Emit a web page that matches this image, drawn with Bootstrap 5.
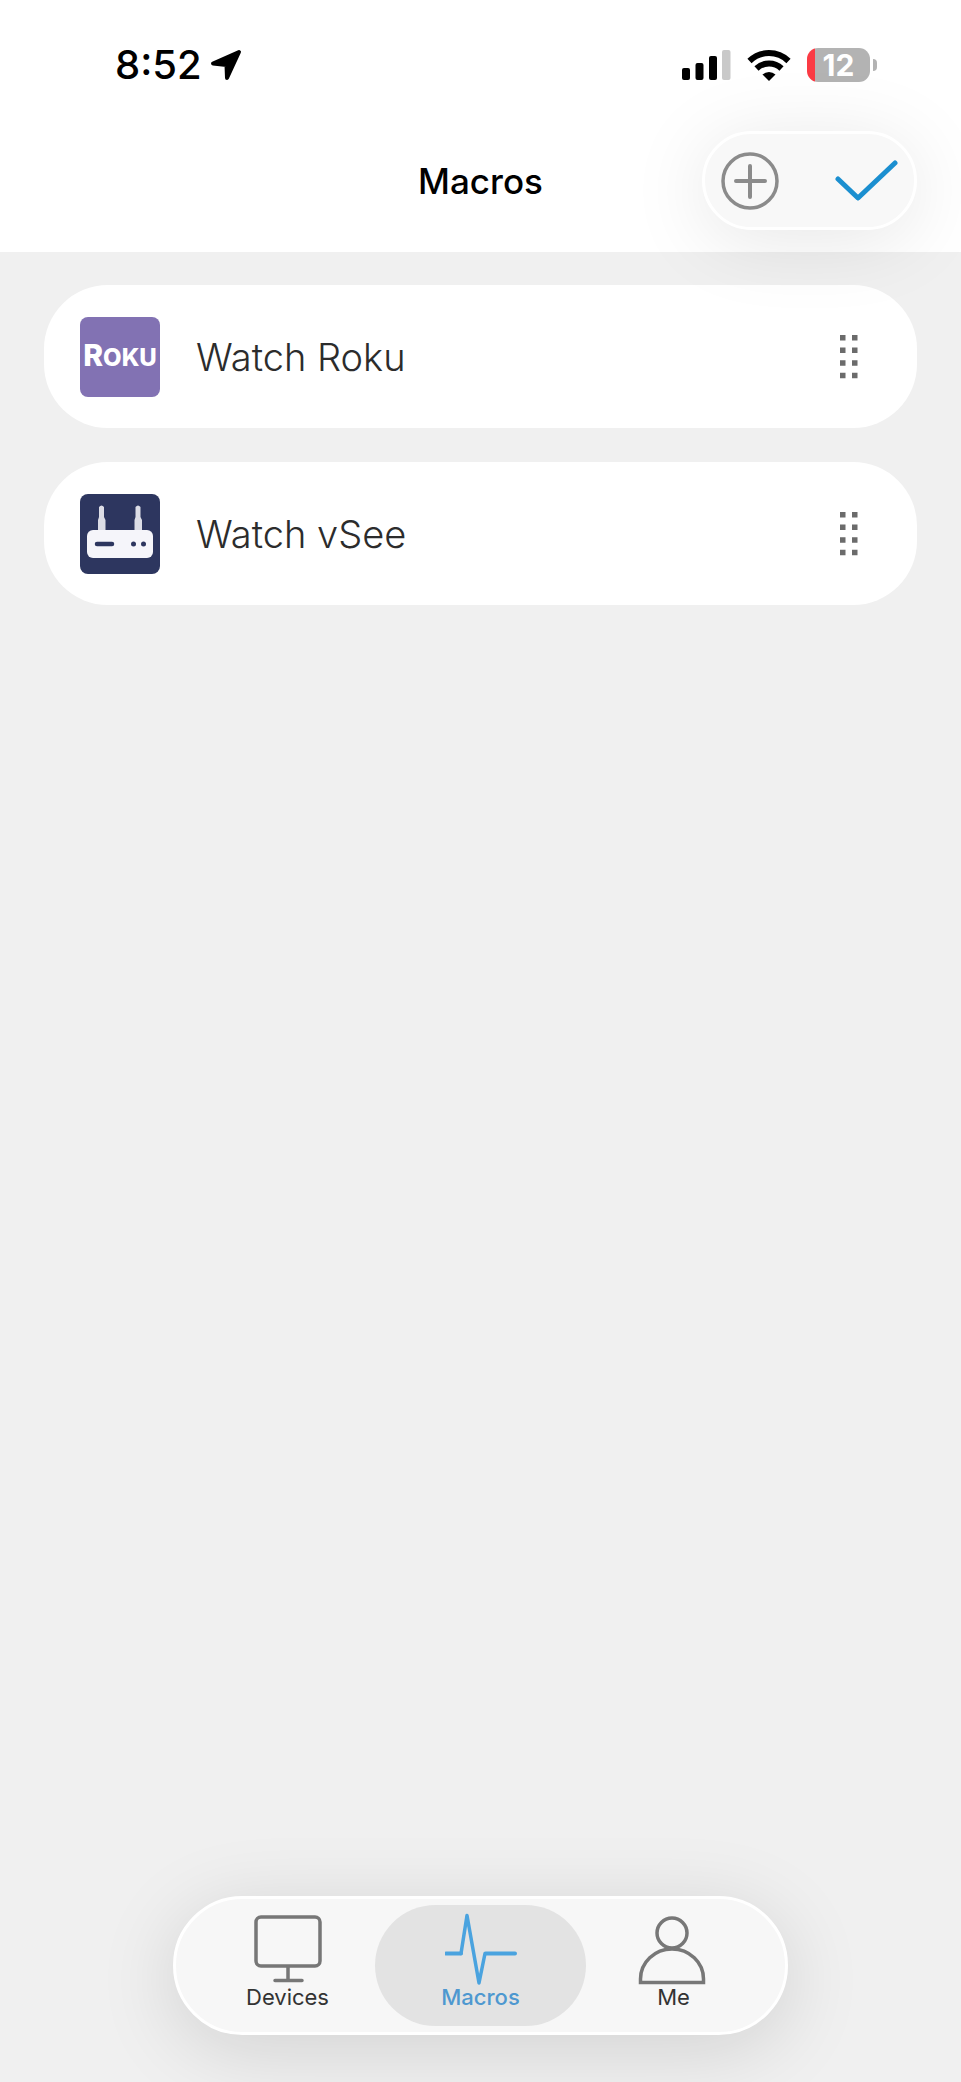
<!DOCTYPE html>
<html lang="en">
<head>
<meta charset="utf-8">
<meta name="viewport" content="width=device-width, initial-scale=1">
<title>Macros</title>
<link href="https://cdn.jsdelivr.net/npm/bootstrap@5.3.0/dist/css/bootstrap.min.css" rel="stylesheet">
<style>
  body { background: #f0f0f0; color: #333; font-family: Inter, "Liberation Sans", sans-serif; }
  svg { display: block; flex: none; }

  .app-header { background: #fff; padding-bottom: 22px; }
  .status-bar { height: 131px; padding: 0 84px 2px 115px; color: #000; }
  .status-time { font-size: 40px; line-height: 40px; font-weight: 500; }
  .battery { width: 63px; height: 34px; border-radius: 11px; background: linear-gradient(90deg, #fb3b44 8px, #b3b3b3 8px); color: #fff; font-size: 30px; line-height: 34px; font-weight: 700; }
  .battery-tip { width: 4px; height: 12px; margin-left: 3px; border-radius: 0 6px 6px 0; background: #b3b3b3; }

  .title-row { display: grid; grid-template-columns: 1fr auto 1fr; padding: 0 44px; }
  .page-title { grid-column: 2; font-size: 35px; line-height: 40px; font-weight: 500; color: #000; }
  .glass { background: #f8f8f8; border: 3px solid #fff; border-radius: 70px; }
  .actions { position: relative; z-index: 2; width: 215px; height: 99px; padding: 0 16px; box-shadow: 0 10px 80px rgba(0, 0, 0, .1); }
  .actions .btn, .drag-handle { padding: 0; border: 0; }

  .macro-list { padding: 33px 44px; gap: 34px; }
  .macro-item { height: 143px; padding: 0 58px 0 36px; border-radius: 64px; background: #fff; }
  .macro-icon { width: 80px; height: 80px; border-radius: 8px; overflow: hidden; }
  .roku { background: #8272b3; color: #fff; font-size: 30px; line-height: 40px; font-weight: 800; }
  .roku span { font-size: 24px; }
  .macro-name { margin-left: 36px; font-size: 38px; line-height: 44px; font-weight: 300; color: #2c2c2c; text-decoration: none; }

  .tab-dock { padding-bottom: 47px; }
  .tab-pill { width: 64%; min-width: 612px; height: 139px; padding: 6px 15px; background: #f7f7f7; box-shadow: 0 14px 80px rgba(0, 0, 0, .13); }
  .tab-link { position: relative; flex: 1 1 0; padding-top: 6px; color: #333; font-size: 22px; line-height: 24px; text-decoration: none; }
  .tab-link svg, .tab-link span { position: relative; }
  .tab-link.active { color: #4e98d0; font-weight: 500; }
  .tab-link.active::before { content: ""; position: absolute; inset: 0 -9px; border-radius: 61px; background: #e3e3e3; }
</style>
</head>
<body>
<div class="d-flex flex-column min-vh-100">
  <header class="app-header">
    <div class="status-bar d-flex align-items-center justify-content-between">
      <div class="d-flex align-items-center gap-2">
        <span class="status-time">8:52</span>
        <svg width="32" height="32" viewBox="0 0 32 32" aria-hidden="true"><path d="M29 3 3 14.500 16.500 16 17 29Z" fill="#000" stroke="#000" stroke-width="4" stroke-linejoin="round"/></svg>
      </div>
      <div class="d-flex align-items-center">
        <svg width="49" height="32" viewBox="0 0 49 32" aria-hidden="true"><g fill="#000"><rect y="19" width="8" height="12" rx="2"/><rect x="13.500" y="14" width="8" height="17" rx="2"/><rect x="27" y="7" width="8" height="24" rx="2"/></g><rect x="40" y="1" width="8.500" height="30" rx="2" fill="#c9c9c9"/></svg>
        <svg class="mx-3" width="44" height="32" viewBox="0 0 44 32" aria-hidden="true"><g fill="none" stroke="#000" stroke-width="6"><path d="M2.500 12a28 28 0 0 1 39 0"/><path d="M9.500 19.500a18 18 0 0 1 25 0"/></g><path d="M15.500 25.500a9.500 9.500 0 0 1 13 0L22 32Z"/></svg>
        <div class="battery text-center">12</div>
        <div class="battery-tip"></div>
      </div>
    </div>
    <div class="title-row align-items-center">
      <h1 class="page-title m-0">Macros</h1>
      <div class="actions glass d-flex align-items-center justify-content-between ms-auto">
        <button type="button" class="btn" aria-label="Add macro"><svg width="58" height="60" viewBox="0 0 58 60" fill="none" stroke="#8b8b8b" stroke-linecap="round"><circle cx="29" cy="30" r="27" stroke-width="3.500"/><path d="M29 15v31M15 30h29" stroke-width="4"/></svg></button>
        <button type="button" class="btn" aria-label="Done"><svg width="64" height="44" viewBox="0 0 64 44" fill="none" stroke="#1b8fd0" stroke-width="5" stroke-linecap="round"><path d="M4 20 24 39 61 4" stroke-linejoin="round"/></svg></button>
      </div>
    </div>
  </header>

  <main class="macro-list d-flex flex-column">
    <div class="macro-item d-flex align-items-center">
      <div class="macro-icon roku d-flex align-items-center justify-content-center"><div>R<span>OKU</span></div></div>
      <a href="#" class="macro-name">Watch Roku</a>
      <button type="button" class="btn drag-handle ms-auto" aria-label="Reorder Watch Roku"><svg width="20" height="44" viewBox="0 0 20 44" fill="#6b6b6b"><path d="M1 0h5.500v5.500H1zM13 0h5.500v5.500h-5.500zM1 12.600h5.500v5.500H1zM13 12.600h5.500v5.500h-5.500zM1 25.200h5.500v5.500H1zM13 25.200h5.500v5.500h-5.500zM1 37.800h5.500v5.500H1zM13 37.800h5.500v5.500h-5.500z"/></svg></button>
    </div>
    <div class="macro-item d-flex align-items-center">
      <svg class="macro-icon" viewBox="0 0 80 80" aria-hidden="true"><rect width="80" height="80" fill="#2d365f"/><path d="M18 38V26l1-3V13q2.500-3 5 0v10l1.500 3v12zM54.500 38V26l1-3V13q2.500-3 5 0v10l1.500 3v12z" fill="#dcdde6"/><rect x="7" y="36" width="66" height="28" rx="6" fill="#f5f5fa"/><path d="M17 50h15" stroke="#2d365f" stroke-width="4.500" stroke-linecap="round"/><g fill="#2d365f"><circle cx="53.500" cy="50" r="2.500"/><circle cx="63.500" cy="50" r="2.500"/></g></svg>
      <a href="#" class="macro-name">Watch vSee</a>
      <button type="button" class="btn drag-handle ms-auto" aria-label="Reorder Watch vSee"><svg width="20" height="44" viewBox="0 0 20 44" fill="#6b6b6b"><path d="M1 0h5.500v5.500H1zM13 0h5.500v5.500h-5.500zM1 12.600h5.500v5.500H1zM13 12.600h5.500v5.500h-5.500zM1 25.200h5.500v5.500H1zM13 25.200h5.500v5.500h-5.500zM1 37.800h5.500v5.500H1zM13 37.800h5.500v5.500h-5.500z"/></svg></button>
    </div>
  </main>

  <footer class="tab-dock mt-auto d-flex justify-content-center">
    <nav class="tab-pill glass d-flex" aria-label="Main">
      <a href="#" class="tab-link d-flex flex-column align-items-center"><svg width="72" height="74" viewBox="-1 0 72 74" fill="none" stroke="#777" stroke-width="3.500" stroke-linecap="round"><rect x="4" y="6" width="64" height="49" rx="5"/><path d="M36 56v12M23 69.500h27"/></svg><span>Devices</span></a>
      <a href="#" class="tab-link active d-flex flex-column align-items-center" aria-current="page"><svg width="72" height="74" viewBox="0 0 72 74" fill="none" stroke="#4aa3df" stroke-linecap="round" stroke-linejoin="round"><path d="M1 42.500h15M41 42.500h29" stroke-width="4"/><path d="M16 42.500 22 4.500 34 72 40 42.500" stroke-width="3.500"/></svg><span>Macros</span></a>
      <a href="#" class="tab-link d-flex flex-column align-items-center"><svg width="72" height="74" viewBox="2 0 72 74" fill="none" stroke="#777" stroke-width="3.500"><circle cx="36" cy="22" r="15"/><path d="M4.500 71.500V68a31.500 30 0 0 1 63 0v3.500z"/></svg><span>Me</span></a>
    </nav>
  </footer>
</div>
<script src="https://cdn.jsdelivr.net/npm/bootstrap@5.3.0/dist/js/bootstrap.bundle.min.js"></script>
</body>
</html>
